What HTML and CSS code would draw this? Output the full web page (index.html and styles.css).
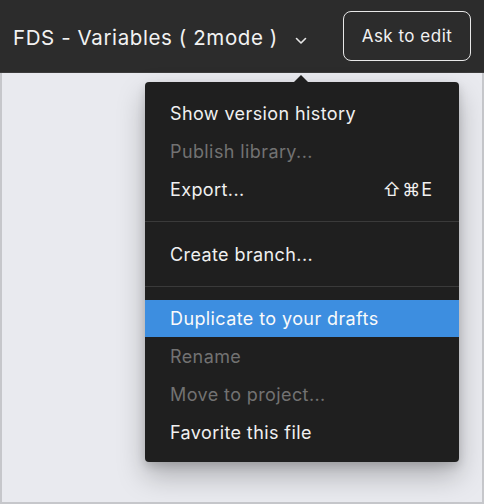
FILE: index.html
```html
<!DOCTYPE html>
<html>
<head>
<meta charset="utf-8">
<link rel="stylesheet" href="styles.css">
</head>
<body>
<div class="frame">
  <header class="topbar">
    <div class="title"><span>FDS - Variables ( 2mode )</span><svg class="chev" width="12" height="8" viewBox="0 0 12 8"><path d="M1.5 1.5 L6 6 L10.5 1.5" fill="none" stroke="#e6e6e6" stroke-width="1.6" stroke-linecap="round" stroke-linejoin="round"/></svg></div>
    <button class="ask">Ask to edit</button>
  </header>
  <main class="canvas">
    <div class="menu">
      <div class="caret"></div>
      <div class="item">Show version history</div>
      <div class="item disabled">Publish library...</div>
      <div class="item"><span>Export...</span><span class="shortcut">⇧⌘E</span></div>
      <div class="sep"></div>
      <div class="item">Create branch...</div>
      <div class="sep"></div>
      <div class="item active">Duplicate to your drafts</div>
      <div class="item disabled">Rename</div>
      <div class="item disabled">Move to project...</div>
      <div class="item">Favorite this file</div>
    </div>
  </main>
</div>
</body>
</html>
```

FILE: styles.css
```css
* { box-sizing: border-box; }
html, body { margin: 0; padding: 0; }
body {
  width: 484px;
  height: 504px;
  overflow: hidden;
  font-family: Inter, "Noto Sans", sans-serif;
  background: #c6c7cb;
}
.frame {
  width: 484px;
  height: 504px;
  border: 2px solid #c6c7cb;
  border-top: 0;
  display: flex;
  flex-direction: column;
}
.topbar {
  height: 73px;
  background: #2c2c2c;
  border-bottom: 1px solid #3c3c3c;
  margin: 0 -2px;
  padding: 0 13px 0 13px;
  display: flex;
  align-items: center;
  justify-content: space-between;
  flex-shrink: 0;
}
.title {
  color: #f2f2f2;
  font-size: 20.5px;
  letter-spacing: 0.6px;
  display: flex;
  align-items: center;
  white-space: nowrap;
  margin-top: 2px;
}
.chev { margin-left: 17px; margin-top: 7px; }
.ask {
  background: transparent;
  color: #f2f2f2;
  font-family: inherit;
  font-size: 17px;
  letter-spacing: 0.5px;
  border: 1.5px solid #e8e8e8;
  border-radius: 8px;
  width: 128px;
  height: 50px;
  padding: 0;
}
.canvas {
  flex: 1;
  background: #e9eaef;
  position: relative;
  padding: 9px 0 0 143px;
}
.menu {
  position: relative;
  width: 314px;
  background: #1f1f1f;
  border-radius: 4px;
  padding: 12px 0 11px;
  box-shadow: 0 14px 28px rgba(0,0,0,0.25), 0 4px 10px rgba(0,0,0,0.15);
}
.caret {
  position: absolute;
  top: -7px;
  left: 148px;
  width: 0;
  height: 0;
  border-left: 8px solid transparent;
  border-right: 8px solid transparent;
  border-bottom: 8px solid #1f1f1f;
}
.item {
  height: 38px;
  padding: 0 26px 0 25px;
  display: flex;
  align-items: center;
  justify-content: space-between;
  color: #f0f0f0;
  font-size: 18px;
  letter-spacing: 0.4px;
}
.item.disabled { color: #727272; }
.item.active { background: #3d8ee0; color: #fafafa; height: 37px; }
.shortcut { letter-spacing: 1px; }
.sep {
  height: 1px;
  background: #3a3a3a;
  margin: 13px 0;
}
```
